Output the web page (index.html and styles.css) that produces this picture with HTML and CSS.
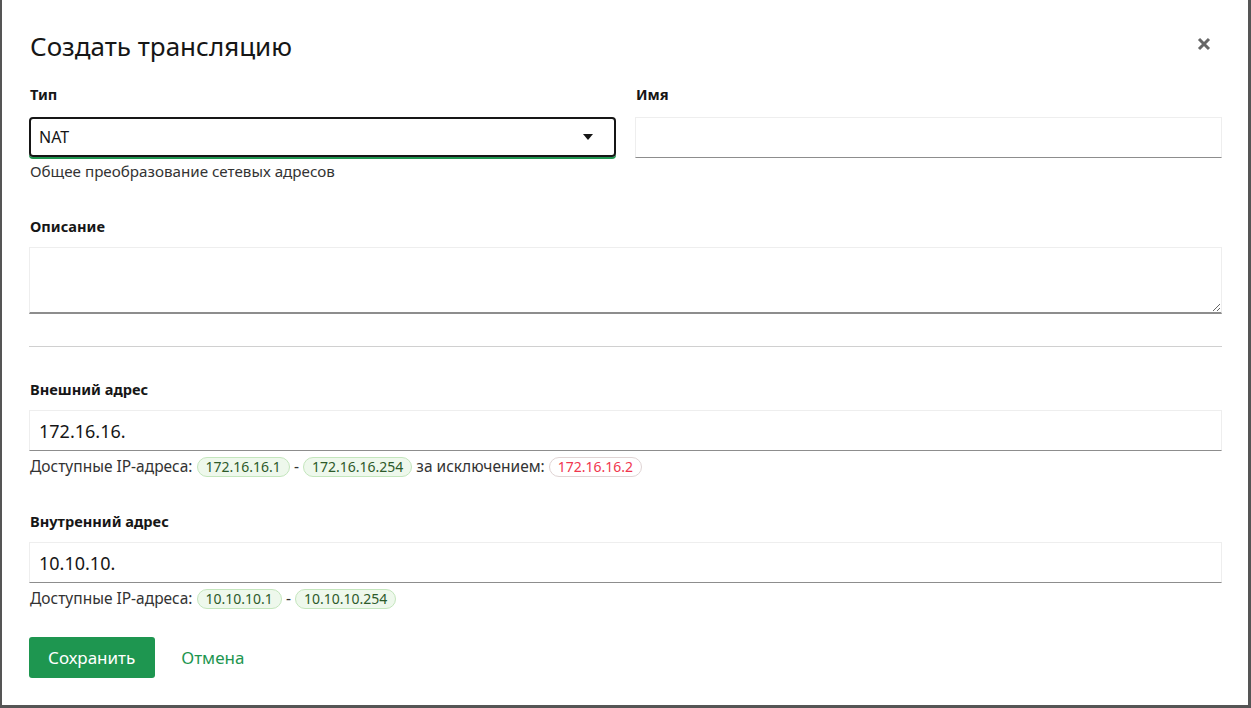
FILE: index.html
```html
<!DOCTYPE html>
<html lang="ru">

<head>
    <meta charset="UTF-8">
    <meta name="viewport" content="width=device-width, initial-scale=1.0">
    <title>Создать трансляцию</title>
    <link rel="stylesheet" href="styles.css">
</head>

<body>
    <div class="modal">
        <div class="modal-header">
            <h1 class="title">Создать трансляцию</h1>
            <button class="close" aria-label="Закрыть">
                <svg width="14" height="14" viewBox="0 0 14 14">
                    <path d="M2 2 L12 12 M12 2 L2 12" stroke="#666" stroke-width="3" stroke-linecap="butt" />
                </svg>
            </button>
        </div>

        <div class="row">
            <div class="field">
                <label class="label">Тип</label>
                <div class="select">
                    <span>NAT</span>
                    <svg width="12" height="8" viewBox="0 0 12 8">
                        <path d="M1 1 L11 1 L6 7 Z" fill="#161616" />
                    </svg>
                </div>
                <div class="helper">Общее преобразование сетевых адресов</div>
            </div>
            <div class="field">
                <label class="label">Имя</label>
                <input type="text" class="input">
            </div>
        </div>

        <div class="field desc">
            <label class="label">Описание</label>
            <textarea class="textarea"></textarea>
        </div>

        <hr class="divider">

        <div class="field">
            <label class="label">Внешний адрес</label>
            <input type="text" class="input ip" value="172.16.16.">
            <div class="helper ips">
                Доступные IP-адреса:
                <span class="tag">172.16.16.1</span> -
                <span class="tag">172.16.16.254</span> за исключением:
                <span class="tag red">172.16.16.2</span>
            </div>
        </div>

        <div class="field inner">
            <label class="label">Внутренний адрес</label>
            <input type="text" class="input ip" value="10.10.10.">
            <div class="helper ips">
                Доступные IP-адреса:
                <span class="tag">10.10.10.1</span> -
                <span class="tag">10.10.10.254</span>
            </div>
        </div>

        <div class="actions">
            <button class="btn primary">Сохранить</button>
            <button class="btn ghost">Отмена</button>
        </div>
    </div>
</body>

</html>
```

FILE: styles.css
```css
* {
    box-sizing: border-box;
}

body {
    margin: 0;
    padding: 0 3px 3px 2px;
    height: 708px;
    background: #555555;
    font-family: 'Noto Sans', 'Open Sans', sans-serif;
    color: #161616;
}

.modal {
    background: #fff;
    height: 705px;
    padding: 0 26px 0 27px;
}

.modal-header {
    display: flex;
    justify-content: space-between;
    align-items: center;
    height: 86px;
    padding-top: 5px;
}

.title {
    margin: 0 0 0 1px;
    font-size: 26px;
    font-weight: 400;
    line-height: 32px;
}

.close {
    border: none;
    background: none;
    padding: 0;
    margin-right: 11px;
    cursor: pointer;
}

.row {
    display: grid;
    grid-template-columns: 1fr 1fr;
    gap: 19px;
}

.field {
    display: flex;
    flex-direction: column;
}

.label {
    font-size: 14.6px;
    font-weight: 700;
    margin: 0 0 13px 1px;
    line-height: 16px;
}

.row .label {
    margin-bottom: 15px;
}

.select {
    display: flex;
    justify-content: space-between;
    align-items: center;
    height: 40px;
    border: 2px solid #161616;
    border-radius: 4px;
    padding: 0 20px 0 8px;
    font-size: 16px;
    box-shadow: 0 2px 0 #1e9650;
}

.input {
    height: 41px;
    border: 1px solid #eeeeee;
    border-bottom-color: #8d8d8d;
    background: #fff;
    font-family: inherit;
    font-size: 18px;
    padding: 0 9px;
    color: #161616;
}

.helper {
    font-size: 15.2px;
    color: #333;
    margin: 5px 0 0 1px;
    line-height: 18px;
}

.desc {
    margin-top: 38px;
}

.textarea {
    height: 67px;
    border: 1px solid #eeeeee;
    border-bottom: 2px solid #8d8d8d;
    resize: vertical;
    font-family: inherit;
}

.divider {
    border: none;
    border-top: 1px solid #d0d0d0;
    margin: 32px 0 34px;
}

.ips {
    margin-top: 6px;
    font-size: 15.5px;
}

.tag {
    display: inline-block;
    padding: 0 8px;
    line-height: 18px;
    border: 1px solid #c4e6bd;
    background: #eef8ec;
    border-radius: 10px;
    color: #2d5a2a;
    font-size: 14px;
}

.tag.red {
    background: #fff;
    border-color: #e0d4d4;
    color: #f0364e;
}

.inner {
    margin-top: 36px;
}

.actions {
    display: flex;
    gap: 7px;
    margin-top: 28px;
}

.btn {
    height: 41px;
    padding: 0 19px;
    font-family: inherit;
    font-size: 17px;
    border: none;
    border-radius: 3px;
    cursor: pointer;
}

.primary {
    background: #1e9650;
    color: #fff;
    padding: 0 20px 0 19px;
}

.ghost {
    background: none;
    color: #1e9650;
}
```
